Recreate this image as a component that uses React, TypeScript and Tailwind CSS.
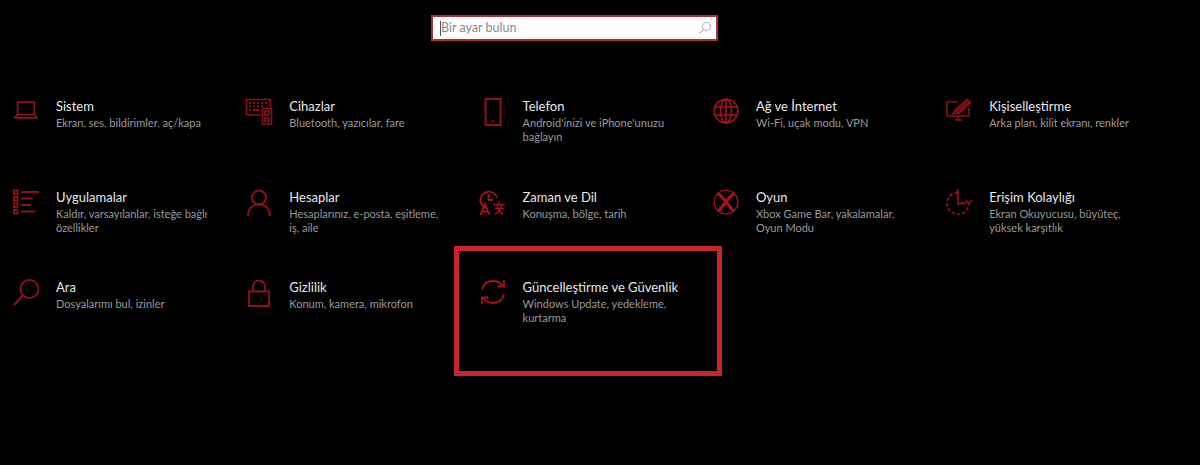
const S = "#8e1119";
const base = { fill: "none", stroke: S, strokeWidth: 1.6 } as const;

const Laptop = () => (
  <svg width="26" height="24" viewBox="0 0 28 24" {...base} strokeWidth="1.9">
    <path d="M5 3.500h18v13.500H5zM1.500 20.500h25M5 17l-3.500 3.500M23 17l3.500 3.500" />
  </svg>
);
const Devices = () => (
  <svg width="28" height="28" viewBox="0 0 28 28" {...base}>
    <path d="M16 17H1.500V1.500h24V10" />
    <path d="M4 5h2M8 5h2M12 5h2M16 5h2M20 5h2M4 8.500h2M8 8.500h2M12 8.500h2M16 8.500h2M4 12h2M8 12h6" strokeWidth="1.800" />
    <path d="M17.500 10.500h9V26h-9z" />
    <circle cx="22" cy="15" r="2.400" />
    <path d="M20 20h4v3.500h-4z" />
  </svg>
);
const Phone = () => (
  <svg width="18" height="28" viewBox="0 0 18 28" {...base} strokeWidth="2">
    <path d="M1.500 1h15v26h-15zM7.500 23.500h3" />
  </svg>
);
const Globe = () => (
  <svg width="26" height="26" viewBox="0 0 26 26" {...base} stroke="#a5141c">
    <circle cx="13" cy="13" r="11.800" />
    <ellipse cx="13" cy="13" rx="5.500" ry="11.800" />
    <path d="M13 1v24M1.500 9h23M1.500 17h23" />
  </svg>
);
const Brush = () => (
  <svg width="27" height="24" viewBox="0 0 27 24" {...base}>
    <path d="M12 4H1v14h22V10M9 22h7M12 18v4" />
    <path d="M9 12 L21 1.500l3.500 3L13 15.500z" fill="#6e0d13" />
    <path d="M9 12l-2 4 5-1" />
  </svg>
);
const Apps = () => (
  <svg width="28" height="26" viewBox="0 0 28 26" {...base} strokeWidth="1.800">
    <path d="M2 1.500h3.500V5H2zM2 8h3.500v3.500H2zM2 14.500h3.500V18H2zM2 21h3.500v3.500H2z" />
    <path d="M9 3h18M9 9.500h12M9 16h10M9 22.500h14" />
  </svg>
);
const Person = () => (
  <svg width="24" height="28" viewBox="0 0 24 28" {...base} strokeWidth="1.900">
    <circle cx="12" cy="8.500" r="7" />
    <path d="M1 27c0-7 4-11.500 11-11.500s11 4.500 11 11.500" />
  </svg>
);
const TimeLang = () => (
  <svg width="27" height="27" viewBox="0 0 27 27" {...base} stroke="#a5141c" strokeWidth="1.800">
    <path d="M8 19.500A8.500 8.500 0 1 1 18 9" />
    <path d="M9.500 5v6H14" />
    <path d="M1.500 26l4.500-11 4.500 11M3 22.500h6" />
    <path d="M14 15.500h12M20 12.500v3M16 19.500h9M18 15.500c1 5 3 8 6 10M23 15.500c-1 5-3 8-7 10" strokeWidth="1.400" />
  </svg>
);
const Xbox = () => (
  <svg width="26" height="26" viewBox="0 0 26 26" {...base}>
    <circle cx="13" cy="13" r="11.800" />
    <path d="M5 4.500C10 8 16 17 21 22.500M21 4.500C16 8 10 17 5 22.500" stroke="#a5141c" strokeWidth="3.200" />
  </svg>
);
const Access = () => (
  <svg width="27" height="26" viewBox="0 0 27 26" {...base} strokeWidth="1.800">
    <path d="M12 3.500a11 11 0 1 0 11 11" strokeDasharray="3.500 2" />
    <path d="M12 0v14.500h8M26 11l-3 3.500-3.500-3" />
  </svg>
);
const Search = () => (
  <svg width="27" height="27" viewBox="0 0 27 27" {...base} strokeWidth="1.900">
    <circle cx="16.500" cy="10" r="9" />
    <path d="M10 16.500L1 26" strokeWidth="2.400" />
  </svg>
);
const Lock = () => (
  <svg width="22" height="28" viewBox="0 0 22 28" {...base} strokeWidth="1.900">
    <path d="M1 12.500h20V27H1zM5 12.500V7.500a6 6 0 0 1 12 0v5" />
  </svg>
);
const Sync = () => (
  <svg width="28" height="26" viewBox="0 0 28 26" {...base} stroke="#a5141c" strokeWidth="1.800">
    <path d="M3 10.500C4.500 5 9 2 14 2c4 0 7.500 1.800 10 5" />
    <path d="M25 1v6.500h-6.500" />
    <path d="M25 15.500C23.500 21 19 24 14 24c-4 0-7.500-1.800-10-5" />
    <path d="M3 25v-6.500h6.500" />
  </svg>
);

type Item = { icon: React.ReactNode; title: string; desc: string };

const items: Item[] = [
  { icon: <Laptop />, title: "Sistem", desc: "Ekran, ses, bildirimler, aç/kapa" },
  { icon: <Devices />, title: "Cihazlar", desc: "Bluetooth, yazıcılar, fare" },
  { icon: <Phone />, title: "Telefon", desc: "Android'inizi ve iPhone'unuzu bağlayın" },
  { icon: <Globe />, title: "Ağ ve İnternet", desc: "Wi-Fi, uçak modu, VPN" },
  { icon: <Brush />, title: "Kişiselleştirme", desc: "Arka plan, kilit ekranı, renkler" },
  { icon: <Apps />, title: "Uygulamalar", desc: "Kaldır, varsayılanlar, isteğe bağlı özellikler" },
  { icon: <Person />, title: "Hesaplar", desc: "Hesaplarınız, e-posta, eşitleme, iş, aile" },
  { icon: <TimeLang />, title: "Zaman ve Dil", desc: "Konuşma, bölge, tarih" },
  { icon: <Xbox />, title: "Oyun", desc: "Xbox Game Bar, yakalamalar, Oyun Modu" },
  { icon: <Access />, title: "Erişim Kolaylığı", desc: "Ekran Okuyucusu, büyüteç, yüksek karşıtlık" },
  { icon: <Search />, title: "Ara", desc: "Dosyalarımı bul, izinler" },
  { icon: <Lock />, title: "Gizlilik", desc: "Konum, kamera, mikrofon" },
  { icon: <Sync />, title: "Güncelleştirme ve Güvenlik", desc: "Windows Update, yedekleme, kurtarma" },
];

export default function App() {
  return (
    <div className="relative h-[465px] w-[1200px] overflow-hidden bg-black font-['Lato','Noto_Sans',sans-serif]">
      <div className="pl-[431px] pt-[15px]">
        <div className="flex h-[26px] w-[287px] items-center justify-between border-2 border-[#a3353c] bg-white pl-[7px] pr-[4px]">
          <div className="flex items-center">
            <span className="h-[15px] w-px bg-[#555]" />
            <span className="text-[12.500px] text-[#8a8a8a]">Bir ayar bulun</span>
          </div>
          <svg width="14" height="14" viewBox="0 0 14 14" fill="none" stroke="#b5b5b5" strokeWidth="1.100">
            <circle cx="8.500" cy="5.500" r="4" />
            <path d="M5.500 8.500L1.500 12.500" />
          </svg>
        </div>
      </div>
      <div className="grid grid-cols-[repeat(5,233.3px)] auto-rows-[90.5px] pl-[11px] pt-[56px]">
        {items.map((it) => (
          <div key={it.title} className="flex">
            <div className="flex h-[32px] w-[45px] shrink-0 items-start pl-[1px] pt-[1px]">
              <div className="flex w-[28px] justify-center">{it.icon}</div>
            </div>
            <div className="w-[160px]">
              <div className="text-[13px] leading-[18px] text-[#e8e8e8]">{it.title}</div>
              <div className="mt-[1px] text-[11px] leading-[14px] text-[#9a9a9a]">{it.desc}</div>
            </div>
          </div>
        ))}
      </div>
      <div className="absolute left-[454px] top-[246px] h-[130px] w-[268px] border-[5px] border-[#c8242c]" />
    </div>
  );
}
